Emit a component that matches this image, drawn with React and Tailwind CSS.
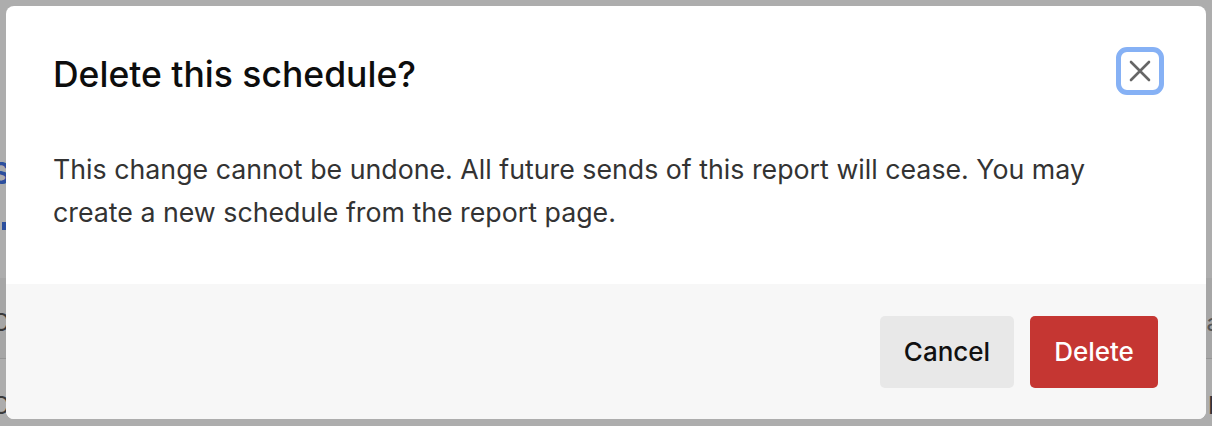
import React from "react";

function Backdrop() {
  return (
    <div className="[grid-area:1/1] w-[1212px] h-[426px] flex flex-col bg-[#adadad] overflow-hidden">
      <div className="h-[156px] shrink-0"></div>
      <div className="h-[34px] shrink-0 flex">
        <span className="-ml-[9px] text-[30px] font-semibold leading-[34px] text-[#2c4f9e]">S</span>
      </div>
      <div className="h-[32px] shrink-0"></div>
      <div className="h-[8px] w-[4px] ml-[2px] shrink-0 bg-[#2c4f9e]"></div>
      <div className="h-[48px] shrink-0"></div>
      <div className="h-[80px] shrink-0 bg-[#a6a6a6] flex justify-between items-start pt-[33px]">
        <span className="-ml-[8px] text-[24px] leading-none text-[#3a3a3a]">C</span>
        <span className="-mr-[8px] text-[24px] leading-none text-[#555]">a</span>
      </div>
      <div className="h-[1px] shrink-0 bg-[#959595]"></div>
      <div className="flex-1 flex justify-between items-start pt-[35px]">
        <span className="-ml-[8px] text-[24px] leading-none text-[#3a3a3a]">C</span>
        <span className="-mr-[2px] text-[24px] leading-none text-[#333]">l</span>
      </div>
    </div>
  );
}

export default function App() {
  return (
    <div className="grid w-[1212px] h-[426px] overflow-hidden" style={{ fontFamily: "Inter, 'Noto Sans', sans-serif" }}>
      <Backdrop />
      {/* dialog layer */}
      <div className="[grid-area:1/1] p-[6px] pb-[7px] flex">
        <div className="flex-1 rounded-[8px] bg-white overflow-hidden flex flex-col">
          <div className="flex items-start justify-between pl-[47px] pr-[42px] pt-[41px]">
            <h2 className="mt-[8px] text-[35.5px] leading-[40px] font-[550] text-[#0d0d0d]">Delete this schedule?</h2>
            <button className="w-[48px] h-[48px] rounded-[11px] border-[5px] border-[#86b1f5] bg-white flex items-center justify-center">
              <svg width="22" height="22" viewBox="0 0 22 22" fill="none" stroke="#666666" strokeWidth="2.6" strokeLinecap="round">
                <path d="M2 2 L20 20 M20 2 L2 20" />
              </svg>
            </button>
          </div>
          <div className="px-[47px] mt-[53px]">
            <p className="text-[26.75px] leading-[43px] text-[#333333] max-w-[1090px]">
              This change cannot be undone. All future sends of this report will cease. You may create a new schedule from the report page.
            </p>
          </div>
          <div className="mt-auto h-[135px] bg-[#f7f7f7] flex items-center justify-end gap-[16px] pr-[48px]">
            <button className="w-[134px] h-[72px] rounded-[5px] bg-[#e8e8e8] text-[26px] font-medium text-[#111]">Cancel</button>
            <button className="w-[128px] h-[72px] rounded-[5px] bg-[#c53632] text-[26px] font-medium text-white">Delete</button>
          </div>
        </div>
      </div>
    </div>
  );
}
